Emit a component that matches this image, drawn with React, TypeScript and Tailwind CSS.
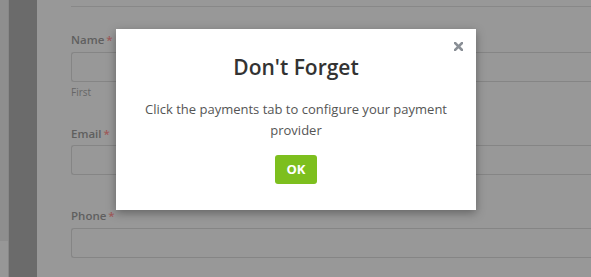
import React from "react";

const Field = ({ label, hint }: { label: string; hint?: string }) => (
  <div className="flex flex-col">
    <label className="text-[11.5px] font-semibold text-[#5f5f5f] leading-none">
      {label}
      <span className="ml-[2px] text-[#a05a5a]">*</span>
    </label>
    <div className="mt-[6px] h-[30px] w-full rounded-l-[3px] border border-r-0 border-[#858585]" />
    {hint && <span className="mt-[5px] text-[10px] text-[#666] leading-none">{hint}</span>}
  </div>
);

const App = () => {
  return (
    <div
      className="relative flex h-[277px] w-[591px] overflow-hidden bg-[#989898]"
      style={{ fontFamily: '"Open Sans", "Noto Sans", sans-serif' }}
    >
      <div className="flex w-[9px] flex-col border-r border-[#878787]">
        <div className="h-[241px] bg-[#8e8e8e]" />
        <div className="flex-1 bg-[#979797]" />
      </div>
      <div className="w-[28px] bg-[#6b6b6b]" />
      <div className="flex flex-1 flex-col pl-[34px]">
        <div className="mt-[6px] border-t border-[#888]" />
        <div className="mt-[27px] flex flex-col">
          <Field label="Name" hint="First" />
          <div className="mt-[31px]">
            <Field label="Email" />
          </div>
          <div className="mt-[35px]">
            <Field label="Phone" />
          </div>
        </div>
      </div>

      <div className="absolute left-[116px] top-[29px] flex h-[181px] w-[360px] flex-col items-center bg-white shadow-[0_3px_9px_rgba(0,0,0,0.35)]">
        <button className="absolute right-[13px] top-[13px] text-[#8a8f96]">
          <svg width="9" height="9" viewBox="0 0 9 9">
            <path d="M1 1L8 8M8 1L1 8" stroke="currentColor" strokeWidth="2.6" strokeLinecap="square" />
          </svg>
        </button>
        <h2 className="mt-[28px] text-[21px] font-semibold leading-none text-[#333]">Don't Forget</h2>
        <p className="mt-[21px] px-[20px] text-center text-[13px] leading-[21px] text-[#555]">
          Click the payments tab to configure your payment provider
        </p>
        <button className="mt-[14px] h-[29px] w-[42px] rounded-[3px] bg-[#7dbf1e] text-[13px] font-bold text-white">
          OK
        </button>
      </div>
    </div>
  );
};

export default App;
